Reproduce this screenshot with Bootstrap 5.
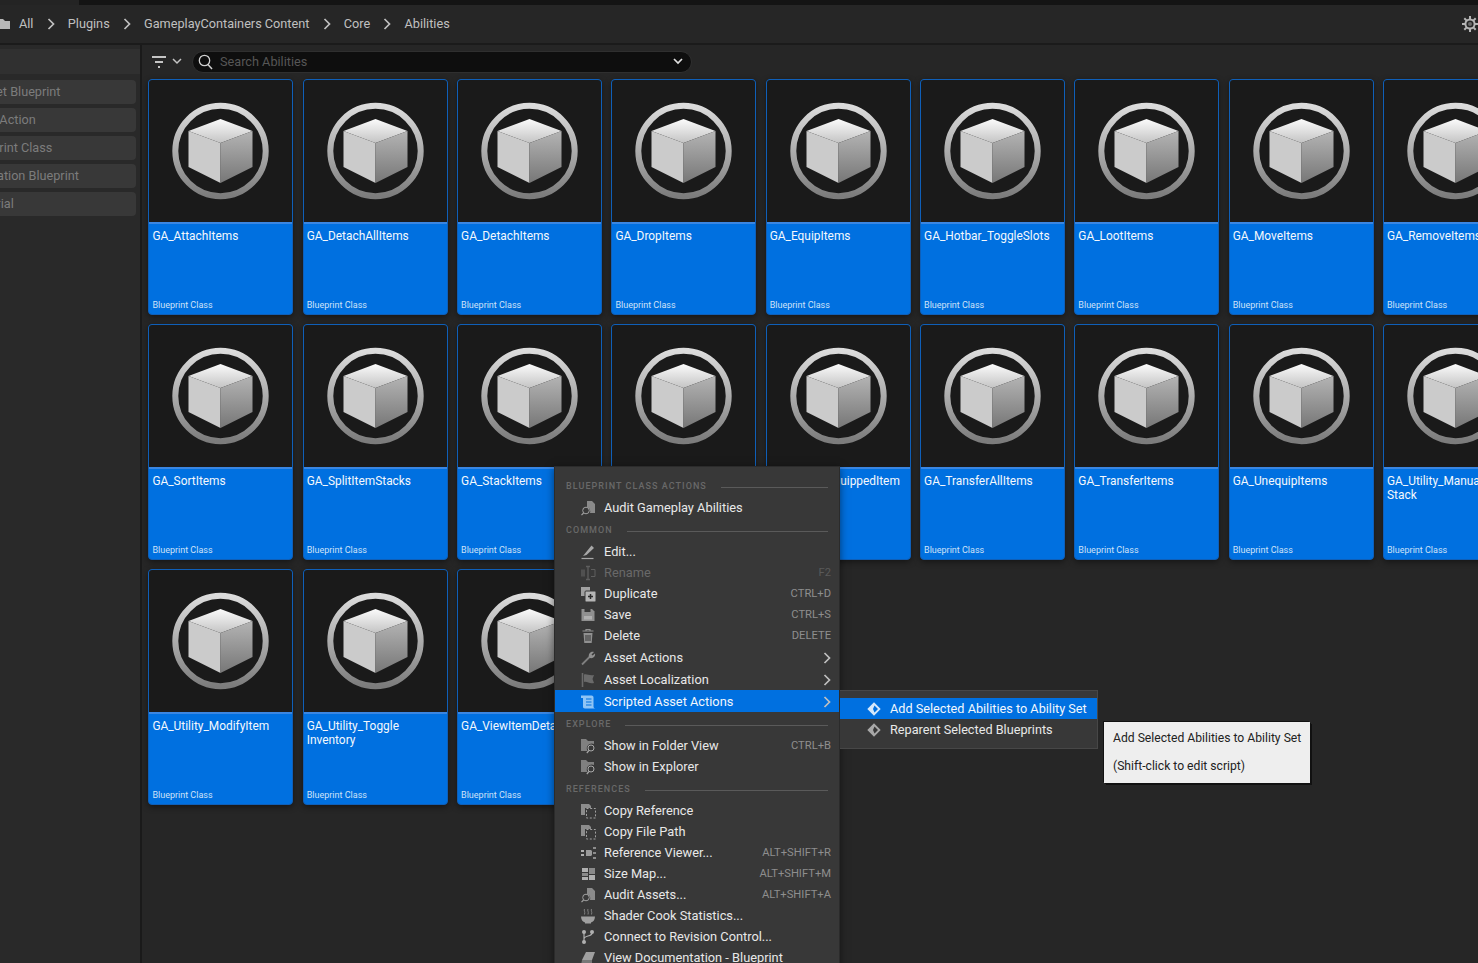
<!DOCTYPE html>
<html lang="en">
<head>
<meta charset="utf-8">
<title>Abilities</title>
<link href="https://cdn.jsdelivr.net/npm/bootstrap@5.3.0/dist/css/bootstrap.min.css" rel="stylesheet">
<style>
html,body{height:100%;overflow:hidden;}
body{background:#262626;font-family:Roboto,"Liberation Sans",sans-serif;font-size:12.7px;color:#c0c0c0;}
.ue-top{height:5px;background:linear-gradient(90deg,#242424 0,#242424 79px,#141414 79px);}
.ue-crumbs{height:38px;background:#262626;}
.ue-crumb{color:#c0c0c0;font-size:12.7px;white-space:nowrap;}
.ue-crumb-first{margin-left:1px;}
.ue-folder{margin-right:8px;}
.ue-chev{width:8px;height:12px;display:block;flex:none;margin:0 13.2px;color:#c0c0c0;}
.ue-rule{height:2px;background:#1b1b1b;}
.ue-body{height:918px;}
.ue-side{width:140px;flex:none;background:#292929;overflow:hidden;}
.ue-side-head{height:25px;margin-top:4px;background:#303030;}
.ue-chips{margin-top:6px;margin-right:4px;gap:4px;}
.ue-chip{height:24px;line-height:24px;background:#383838;color:#7c7c7c;border-radius:4px;margin-left:-32.5px;white-space:nowrap;font-size:12.7px;}
.ue-vr{width:2px;flex:none;background:#1a1a1a;}
.ue-main{min-width:0;overflow:hidden;}
.ue-tools{height:29px;padding-left:10px;padding-top:4px;}
.ue-filter{width:40px;flex:none;}
.ue-filter-chev{margin-left:6px;}
.ue-search{width:500px;height:22px;background:#0e0e0e;border:1px solid #2f2f2f;border-radius:11px;padding:0 8px 0 5px;}
.ue-ph{color:#565656;font-size:12.7px;margin-left:7px;line-height:20px;}
.ue-grid{display:grid;grid-template-columns:repeat(9,145px);grid-auto-rows:236px;column-gap:9.33px;row-gap:9.2px;padding:5px 0 0 6.4px;width:1500px;}
.ue-tile{background:#0070e0;border-radius:4px;border:1px solid #0f5fb8;overflow:hidden;box-shadow:0 2px 6px rgba(0,0,0,.45);width:145px;}
.ue-thumb{height:144px;flex:none;background:#1a1a1a;border-bottom:2px solid #3a86e2;}
.ue-thumb svg{display:block;width:143px;height:140px;}
.ue-meta{height:90px;padding:5px 3px 3px 3px;color:#fff;}
.ue-name{font-size:11.9px;line-height:14px;color:#f4f8fd;white-space:nowrap;}
.ue-kind{font-size:9px;line-height:12px;color:#cfe2f8;}
.ue-menu{position:absolute;left:554px;top:466px;width:286px;height:500px;background:#383838;border:1px solid #2b2b2b;padding-top:7px;box-shadow:0 2px 8px rgba(0,0,0,.5);}
.ue-head{height:22px;margin-bottom:1px;padding:4px 11px 0;gap:14px;}
.ue-head span{font-size:9px;font-weight:500;letter-spacing:1.05px;color:#696969;white-space:nowrap;}
.ue-head i{display:block;flex:1 1 auto;height:1px;background:#5a5a5a;}
.ue-row{height:21px;padding:0 8px 0 25px;gap:8px;font-size:12.8px;color:#e8e8e8;white-space:nowrap;}
.ue-row.tall{height:22px;padding-top:1px;}
.ue-row svg{width:16px;height:16px;flex:none;display:block;}
.ue-row .ue-key{margin-left:auto;margin-top:1px;font-size:11.2px;color:#8e8e8e;}
.ue-row .ue-arrow{margin-left:auto;width:8px;height:12px;color:#c0c0c0;}
.ue-row.off{color:#696969;}
.ue-row.off .ue-key{color:#5a5a5a;}
.ue-row.hot{background:#0070e0;color:#f2f7fd;}
.ue-sub{position:absolute;left:840px;top:690px;width:258px;height:59px;background:#383838;border:1px solid #474747;border-left:0;padding-top:7px;}
.ue-sub .ue-row{padding-left:27px;gap:9px;font-size:12.7px;}
.ue-sub .ue-row svg{width:14px;height:14px;}
.ue-bright{color:#d5e8fb;}
.ue-grey{color:#a8a8a8;}
.ue-tip{position:absolute;left:1104px;top:722px;width:206px;height:61px;background:#eeeeee;color:#222;font-size:12.15px;padding:2px 9px 0;box-shadow:-1px -1px 0 #111,1px 1px 0 #111,2px 2px 0 #111;}
.ue-tip div{height:28px;line-height:28px;white-space:nowrap;}
.ue-defs{position:absolute;width:0;height:0;}
</style>
</head>
<body>
<svg class="ue-defs">
  <defs>
    <linearGradient id="gRing" x1="0" y1="0" x2="0" y2="1"><stop offset="0" stop-color="#dcdcdc"/><stop offset="1" stop-color="#7c7c7c"/></linearGradient>
    <linearGradient id="gTop" x1="0" y1="0" x2="0" y2="1"><stop offset="0" stop-color="#fbfbfb"/><stop offset="1" stop-color="#c4c4c4"/></linearGradient>
    <linearGradient id="gRight" x1="0" y1="0" x2="0" y2="1"><stop offset="0" stop-color="#b4b4b4"/><stop offset="1" stop-color="#777"/></linearGradient>
    <symbol id="icoAsset" viewBox="0 0 143 140">
      <circle cx="71.5" cy="71" r="45.2" fill="none" stroke="url(#gRing)" stroke-width="6"/>
      <polygon points="71.5,39 103.500,51 71.5,63 39.5,51" fill="url(#gTop)"/>
      <polygon points="39.5,51 71.5,63 71.5,103 39.5,87" fill="#cbcbcb"/>
      <polygon points="71.5,63 103.500,51 103.500,87 71.5,103" fill="url(#gRight)"/>
    </symbol>
    <symbol id="icoChev" viewBox="0 0 8 12"><path d="M1.5 1 6.5 6 1.5 11" fill="none" stroke="currentColor" stroke-width="1.7"/></symbol>
    <symbol id="icoAudit" viewBox="0 0 16 16"><path d="M7 1h5l3 3v9H10a5 5 0 0 0-3-6Z" fill="#8a8a8a"/><circle cx="6" cy="10.500" r="3.300" fill="none" stroke="#a0a0a0"/><path d="M3.600 13 1.500 15.200" stroke="#a0a0a0" stroke-width="1.200"/></symbol>
    <symbol id="icoDupe" viewBox="0 0 16 16"><rect x="1" y="1" width="9" height="9" fill="#a0a0a0"/><rect x="5" y="5" width="11" height="11" rx="1" fill="#b5b5b5" stroke="#383838"/><path d="M10.500 8v5M8 10.500h5" stroke="#2b2b2b" stroke-width="1.500"/></symbol>
    <symbol id="icoFolderFind" viewBox="0 0 16 16"><path d="M1 1h5l2 2h6v3a5 5 0 0 0-6.500 7H1Z" fill="#808080"/><circle cx="11" cy="10" r="3" fill="none" stroke="#a8a8a8"/><path d="M9 12.500 6.800 15" stroke="#a8a8a8" stroke-width="1.200"/></symbol>
    <symbol id="icoCopyRef" viewBox="0 0 16 16"><path d="M1 1h8l2 2v2H5v7H1Z" fill="#8c8c8c"/><rect x="6.500" y="5.500" width="9" height="9.500" fill="none" stroke="#a0a0a0" stroke-dasharray="2 1.700"/></symbol>
    <symbol id="icoDiamond" viewBox="0 0 14 14"><path fill-rule="evenodd" d="M7 .3 13.700 7 7 13.700.3 7ZM7.500 3.600 6 7l1.500 3.400L11 7Z" fill="currentColor"/></symbol>
  </defs>
</svg>

<div class="ue-top"></div>
<div class="ue-crumbs d-flex align-items-center">
  <svg width="10" height="12" viewBox="0 0 10 12" class="ue-folder d-block flex-none"><path d="M-2 1h5l2 2h5v8H-2Z" fill="#b8b8b8"/></svg>
  <span class="ue-crumb ue-crumb-first">All</span>
  <svg class="ue-chev"><use href="#icoChev"/></svg><span class="ue-crumb">Plugins</span>
  <svg class="ue-chev"><use href="#icoChev"/></svg><span class="ue-crumb">GameplayContainers Content</span>
  <svg class="ue-chev"><use href="#icoChev"/></svg><span class="ue-crumb">Core</span>
  <svg class="ue-chev"><use href="#icoChev"/></svg><span class="ue-crumb">Abilities</span>
  <svg width="16" height="16" viewBox="0 0 16 16" class="d-block ms-auto flex-none"><circle cx="8" cy="8" r="4.600" fill="none" stroke="#b5b5b5" stroke-width="2"/><circle cx="8" cy="8" r="2" fill="#6a6a6a"/><path d="M8 0v3M8 13v3M0 8h3M13 8h3M2.300 2.300l2.100 2.100M11.600 11.600l2.100 2.100M2.300 13.700l2.100-2.100M11.600 4.400l2.100-2.100" stroke="#b5b5b5" stroke-width="2"/></svg>
</div>
<div class="ue-rule"></div>
<div class="ue-body d-flex">
  <aside class="ue-side d-flex flex-column">
    <div class="ue-side-head"></div>
    <div class="ue-chips d-flex flex-column">
      <div class="ue-chip">Widget Blueprint</div>
      <div class="ue-chip">Input Action</div>
      <div class="ue-chip">Blueprint Class</div>
      <div class="ue-chip">Animation Blueprint</div>
      <div class="ue-chip">Material</div>
    </div>
  </aside>
  <div class="ue-vr"></div>
  <main class="ue-main flex-grow-1">
    <div class="ue-tools d-flex align-items-center">
      <div class="ue-filter d-flex align-items-center">
        <svg width="14" height="12" viewBox="0 0 14 12" class="d-block"><path d="M0 1h14M3 6h8M6 11h2" stroke="#c4c4c4" stroke-width="2"/></svg>
        <svg width="10" height="7" viewBox="0 0 10 7" class="ue-filter-chev d-block"><path d="M1 1 5 5 9 1" fill="none" stroke="#c4c4c4" stroke-width="1.500"/></svg>
      </div>
      <div class="ue-search d-flex align-items-center">
        <svg width="15" height="16" viewBox="0 0 15 16" class="d-block flex-none"><circle cx="6.500" cy="6.500" r="5.200" fill="none" stroke="#d0d0d0" stroke-width="1.300"/><path d="M10 10.500 14 15" stroke="#d0d0d0" stroke-width="1.500"/></svg>
        <span class="ue-ph">Search Abilities</span>
        <svg width="10" height="7" viewBox="0 0 10 7" class="d-block ms-auto"><path d="M1 1 5 5 9 1" fill="none" stroke="#e0e0e0" stroke-width="1.700"/></svg>
      </div>
    </div>
    <div class="ue-grid" id="grid"></div>
  </main>
</div>

<div class="ue-menu">
  <div class="ue-head d-flex align-items-center"><span>BLUEPRINT CLASS ACTIONS</span><i></i></div>
  <div class="ue-row d-flex align-items-center"><svg><use href="#icoAudit"/></svg><span>Audit Gameplay Abilities</span></div>
  <div class="ue-head d-flex align-items-center"><span>COMMON</span><i></i></div>
  <div class="ue-row d-flex align-items-center"><svg viewBox="0 0 16 16"><path d="M11.500 1.500l2.500 2.500L6.500 11 3 12Z" fill="#a8a8a8"/><path d="M1.500 14.500h12" stroke="#a8a8a8" stroke-width="1.200"/></svg><span>Edit...</span></div>
  <div class="ue-row off d-flex align-items-center"><svg viewBox="0 0 16 16"><path d="M1 4.500h4v7H1Z" fill="#505050"/><path d="M11 4.500h4v7h-4" fill="none" stroke="#5e5e5e"/><path d="M8 2v12M6 1.500h4M6 14.500h4" stroke="#5e5e5e" stroke-width="1.300"/></svg><span>Rename</span><span class="ue-key">F2</span></div>
  <div class="ue-row d-flex align-items-center"><svg><use href="#icoDupe"/></svg><span>Duplicate</span><span class="ue-key">CTRL+D</span></div>
  <div class="ue-row d-flex align-items-center"><svg viewBox="0 0 16 16"><path d="M1.500 2h10.500l2.500 2.500V14H1.500Z" fill="#909090"/><rect x="4.500" y="2" width="6" height="3" fill="#383838"/><rect x="4" y="9" width="8" height="3.500" fill="#b0b0b0"/></svg><span>Save</span><span class="ue-key">CTRL+S</span></div>
  <div class="ue-row d-flex align-items-center"><svg viewBox="0 0 16 16"><path d="M2.500 3h11M6 3V1.500h4V3" fill="none" stroke="#909090" stroke-width="1.200"/><path d="M3.500 5h9l-.8 10H4.300Z" fill="#909090"/><path d="M6 7v6M8 7v6M10 7v6" stroke="#383838"/></svg><span>Delete</span><span class="ue-key">DELETE</span></div>
  <div class="ue-row tall d-flex align-items-center"><svg viewBox="0 0 16 16"><path d="M2 14.500 9.500 7" stroke="#808080" stroke-width="1.800"/><path d="M9 7.500C8 4 10.500 1 14 2l-2.500 2.500 1 1L15 3.500c.7 3-2.500 6-6 4Z" fill="#909090"/></svg><span>Asset Actions</span><svg class="ue-arrow"><use href="#icoChev"/></svg></div>
  <div class="ue-row tall d-flex align-items-center"><svg viewBox="0 0 16 16"><path d="M2.500 1v14" stroke="#6a6a6a" stroke-width="1.600"/><path d="M4 2.500c3-1 5 1.500 10 .5l-1.500 4 1.500 4c-5 1-7-2-10-1Z" fill="#6a6a6a"/></svg><span>Asset Localization</span><svg class="ue-arrow"><use href="#icoChev"/></svg></div>
  <div class="ue-row tall hot d-flex align-items-center"><svg viewBox="0 0 16 16"><path d="M1 1.500h10.500c1.500 0 2 1 2 2v9c0 1 .8 2 2 2H5c-1.500 0-2-1-2-2V4H1Z" fill="#8fc4f5"/><path d="M6 5h5.500M6 8h5.500M6 11h5.500" stroke="#0070e0" stroke-width="1.200"/></svg><span>Scripted Asset Actions</span><svg class="ue-arrow"><use href="#icoChev"/></svg></div>
  <div class="ue-head d-flex align-items-center"><span>EXPLORE</span><i></i></div>
  <div class="ue-row d-flex align-items-center"><svg><use href="#icoFolderFind"/></svg><span>Show in Folder View</span><span class="ue-key">CTRL+B</span></div>
  <div class="ue-row d-flex align-items-center"><svg><use href="#icoFolderFind"/></svg><span>Show in Explorer</span></div>
  <div class="ue-head d-flex align-items-center"><span>REFERENCES</span><i></i></div>
  <div class="ue-row d-flex align-items-center"><svg><use href="#icoCopyRef"/></svg><span>Copy Reference</span></div>
  <div class="ue-row d-flex align-items-center"><svg><use href="#icoCopyRef"/></svg><span>Copy File Path</span></div>
  <div class="ue-row d-flex align-items-center"><svg viewBox="0 0 16 16"><path d="M1 6h3M1 10h3" stroke="#b0b0b0" stroke-width="2"/><path d="M6 5h5l1 1v4l-1 1H6Z" fill="#9a9a9a"/><path d="M13 3h3M13 8h3M13 13h3" stroke="#a8a8a8" stroke-width="1.600"/></svg><span>Reference Viewer...</span><span class="ue-key">ALT+SHIFT+R</span></div>
  <div class="ue-row d-flex align-items-center"><svg viewBox="0 0 16 16"><rect x="2" y="2" width="6" height="4" fill="#b0b0b0"/><rect x="2" y="7" width="6" height="3" fill="#8a8a8a"/><rect x="2" y="11" width="6" height="3" fill="#b0b0b0"/><rect x="9" y="2" width="6" height="6" fill="#8a8a8a"/><rect x="9" y="9" width="6" height="5" fill="#b0b0b0"/></svg><span>Size Map...</span><span class="ue-key">ALT+SHIFT+M</span></div>
  <div class="ue-row d-flex align-items-center"><svg><use href="#icoAudit"/></svg><span>Audit Assets...</span><span class="ue-key">ALT+SHIFT+A</span></div>
  <div class="ue-row d-flex align-items-center"><svg viewBox="0 0 16 16"><path d="M1 8.500h14c0 3.500-2 5.500-4 6v1H5v-1c-2-.5-4-2.500-4-6Z" fill="#a0a0a0"/><path d="M4.500 1c-1 1.500 1 2.500 0 5.500M8 1c-1 1.500 1 2.500 0 5.500M11.500 1c-1 1.500 1 2.500 0 5.500" fill="none" stroke="#808080"/></svg><span>Shader Cook Statistics...</span></div>
  <div class="ue-row d-flex align-items-center"><svg viewBox="0 0 16 16"><circle cx="4" cy="3" r="2" fill="#b0b0b0"/><circle cx="4" cy="13" r="2" fill="#b0b0b0"/><circle cx="12" cy="3" r="2" fill="#b0b0b0"/><path d="M4 4v8M12 4c0 4-8 2-8 6" fill="none" stroke="#b0b0b0" stroke-width="1.200"/></svg><span>Connect to Revision Control...</span></div>
  <div class="ue-row d-flex align-items-center"><svg viewBox="0 0 16 16"><path d="M6 2h9l-3 8H2Z" fill="#a0a0a0"/><path d="M2 10h10v5H1Z" fill="#787878"/></svg><span>View Documentation - Blueprint</span></div>
</div>

<div class="ue-sub">
  <div class="ue-row hot d-flex align-items-center"><svg class="ue-bright"><use href="#icoDiamond"/></svg><span>Add Selected Abilities to Ability Set</span></div>
  <div class="ue-row d-flex align-items-center"><svg class="ue-grey"><use href="#icoDiamond"/></svg><span>Reparent Selected Blueprints</span></div>
</div>

<div class="ue-tip">
  <div>Add Selected Abilities to Ability Set</div>
  <div>(Shift-click to edit script)</div>
</div>

<script>
var names=["GA_AttachItems","GA_DetachAllItems","GA_DetachItems","GA_DropItems","GA_EquipItems","GA_Hotbar_ToggleSlots","GA_LootItems","GA_MoveItems","GA_RemoveItems",
"GA_SortItems","GA_SplitItemStacks","GA_StackItems","GA_SwapItems","GA_ToggleEquippedItem","GA_TransferAllItems","GA_TransferItems","GA_UnequipItems","GA_Utility_Manual<br>Stack",
"GA_Utility_ModifyItem","GA_Utility_Toggle<br>Inventory","GA_ViewItemDetails"];
document.getElementById('grid').innerHTML=names.map(function(n){
  return '<div class="ue-tile d-flex flex-column"><div class="ue-thumb"><svg><use href="#icoAsset"/></svg></div><div class="ue-meta d-flex flex-column justify-content-between"><div class="ue-name">'+n+'</div><div class="ue-kind">Blueprint Class</div></div></div>';
}).join('');
</script>
<script src="https://cdn.jsdelivr.net/npm/bootstrap@5.3.0/dist/js/bootstrap.bundle.min.js"></script>
</body>
</html>
